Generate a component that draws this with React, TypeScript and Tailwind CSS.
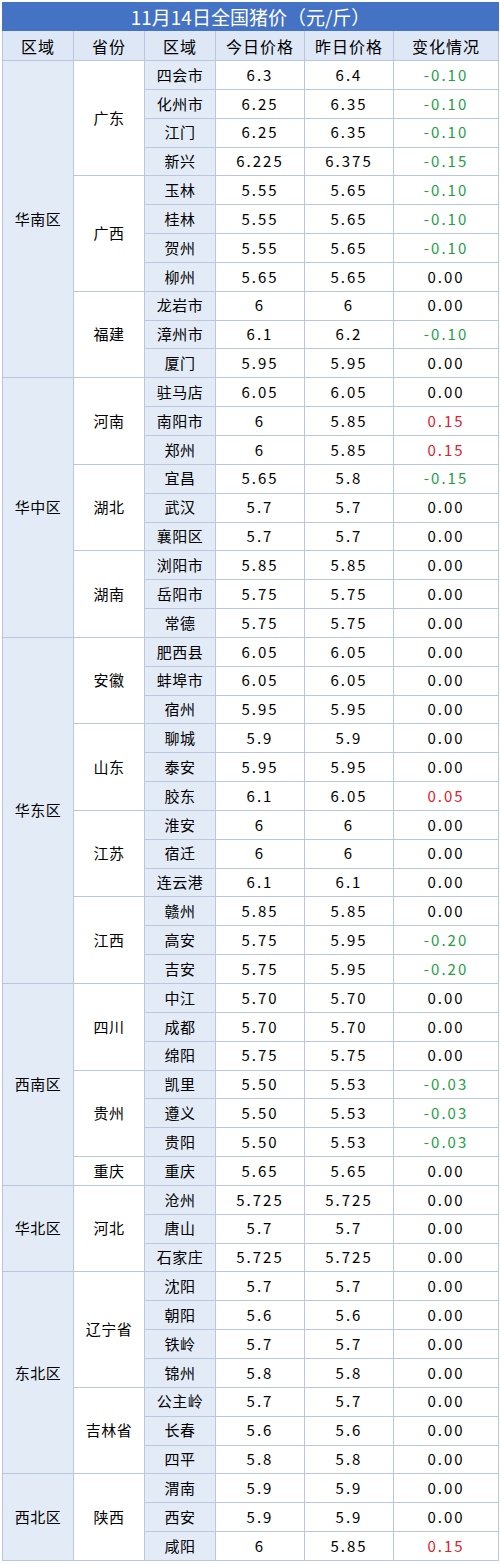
type City = [string, string, string, string]
type Province = { name: string; cities: City[] }
type Region = { name: string; provinces: Province[] }

const regions: Region[] = [
  {
    name: "华南区",
    provinces: [
      {
        name: "广东",
        cities: [
          ["四会市", "6.3", "6.4", "-0.10"],
          ["化州市", "6.25", "6.35", "-0.10"],
          ["江门", "6.25", "6.35", "-0.10"],
          ["新兴", "6.225", "6.375", "-0.15"],
        ],
      },
      {
        name: "广西",
        cities: [
          ["玉林", "5.55", "5.65", "-0.10"],
          ["桂林", "5.55", "5.65", "-0.10"],
          ["贺州", "5.55", "5.65", "-0.10"],
          ["柳州", "5.65", "5.65", "0.00"],
        ],
      },
      {
        name: "福建",
        cities: [
          ["龙岩市", "6", "6", "0.00"],
          ["漳州市", "6.1", "6.2", "-0.10"],
          ["厦门", "5.95", "5.95", "0.00"],
        ],
      },
    ],
  },
  {
    name: "华中区",
    provinces: [
      {
        name: "河南",
        cities: [
          ["驻马店", "6.05", "6.05", "0.00"],
          ["南阳市", "6", "5.85", "0.15"],
          ["郑州", "6", "5.85", "0.15"],
        ],
      },
      {
        name: "湖北",
        cities: [
          ["宜昌", "5.65", "5.8", "-0.15"],
          ["武汉", "5.7", "5.7", "0.00"],
          ["襄阳区", "5.7", "5.7", "0.00"],
        ],
      },
      {
        name: "湖南",
        cities: [
          ["浏阳市", "5.85", "5.85", "0.00"],
          ["岳阳市", "5.75", "5.75", "0.00"],
          ["常德", "5.75", "5.75", "0.00"],
        ],
      },
    ],
  },
  {
    name: "华东区",
    provinces: [
      {
        name: "安徽",
        cities: [
          ["肥西县", "6.05", "6.05", "0.00"],
          ["蚌埠市", "6.05", "6.05", "0.00"],
          ["宿州", "5.95", "5.95", "0.00"],
        ],
      },
      {
        name: "山东",
        cities: [
          ["聊城", "5.9", "5.9", "0.00"],
          ["泰安", "5.95", "5.95", "0.00"],
          ["胶东", "6.1", "6.05", "0.05"],
        ],
      },
      {
        name: "江苏",
        cities: [
          ["淮安", "6", "6", "0.00"],
          ["宿迁", "6", "6", "0.00"],
          ["连云港", "6.1", "6.1", "0.00"],
        ],
      },
      {
        name: "江西",
        cities: [
          ["赣州", "5.85", "5.85", "0.00"],
          ["高安", "5.75", "5.95", "-0.20"],
          ["吉安", "5.75", "5.95", "-0.20"],
        ],
      },
    ],
  },
  {
    name: "西南区",
    provinces: [
      {
        name: "四川",
        cities: [
          ["中江", "5.70", "5.70", "0.00"],
          ["成都", "5.70", "5.70", "0.00"],
          ["绵阳", "5.75", "5.75", "0.00"],
        ],
      },
      {
        name: "贵州",
        cities: [
          ["凯里", "5.50", "5.53", "-0.03"],
          ["遵义", "5.50", "5.53", "-0.03"],
          ["贵阳", "5.50", "5.53", "-0.03"],
        ],
      },
      { name: "重庆", cities: [["重庆", "5.65", "5.65", "0.00"]] },
    ],
  },
  {
    name: "华北区",
    provinces: [
      {
        name: "河北",
        cities: [
          ["沧州", "5.725", "5.725", "0.00"],
          ["唐山", "5.7", "5.7", "0.00"],
          ["石家庄", "5.725", "5.725", "0.00"],
        ],
      },
    ],
  },
  {
    name: "东北区",
    provinces: [
      {
        name: "辽宁省",
        cities: [
          ["沈阳", "5.7", "5.7", "0.00"],
          ["朝阳", "5.6", "5.6", "0.00"],
          ["铁岭", "5.7", "5.7", "0.00"],
          ["锦州", "5.8", "5.8", "0.00"],
        ],
      },
      {
        name: "吉林省",
        cities: [
          ["公主岭", "5.7", "5.7", "0.00"],
          ["长春", "5.6", "5.6", "0.00"],
          ["四平", "5.8", "5.8", "0.00"],
        ],
      },
    ],
  },
  {
    name: "西北区",
    provinces: [
      {
        name: "陕西",
        cities: [
          ["渭南", "5.9", "5.9", "0.00"],
          ["西安", "5.9", "5.9", "0.00"],
          ["咸阳", "6", "5.85", "0.15"],
        ],
      },
    ],
  },
]

const changeColor = (v: string) => {
  const n = parseFloat(v)
  if (n < 0) return "text-[#22a045]"
  if (n > 0) return "text-[#e0202a]"
  return "text-[#000]"
}

const cell = "border border-[#b9c6dc] text-center align-middle p-0"
const num = "tracking-[2px]"

export default function App() {
  return (
    <div
      className="w-[500px] h-[1564px] bg-white pt-[2px] px-[2px]"
      style={{ fontFamily: '"Noto Sans CJK SC", "Noto Sans", sans-serif' }}
    >
      <table className="w-[496px] table-fixed border-collapse text-[15px] text-[#000]">
        <colgroup>
          <col className="w-[71px]" />
          <col className="w-[71px]" />
          <col className="w-[71px]" />
          <col className="w-[89px]" />
          <col className="w-[89px]" />
          <col className="w-[105px]" />
        </colgroup>
        <thead>
          <tr className="h-[28px]">
            <th
              colSpan={6}
              className="border border-[#4472c4] bg-[#4472c4] text-center text-[19px] font-normal text-white leading-none"
            >
              11月14日全国猪价（元/斤）
            </th>
          </tr>
          <tr className="h-[30px] bg-[#dde7f5]">
            {["区域", "省份", "区域", "今日价格", "昨日价格", "变化情况"].map((h, i) => (
              <th key={i} className={`${cell} text-[16px] font-normal tracking-[1px]`}>
                {h}
              </th>
            ))}
          </tr>
        </thead>
        <tbody>
          {regions.map((r) => {
            const total = r.provinces.reduce((s, p) => s + p.cities.length, 0)
            let first = true
            return r.provinces.map((p) =>
              p.cities.map((c, ci) => {
                const showRegion = first
                first = false
                return (
                  <tr key={r.name + p.name + c[0]} className="h-[28.85px]">
                    {showRegion && (
                      <td rowSpan={total} className={`${cell} bg-[#e3ebf7] tracking-[0.5px]`}>
                        {r.name}
                      </td>
                    )}
                    {ci === 0 && (
                      <td rowSpan={p.cities.length} className={`${cell} bg-white tracking-[0.5px]`}>
                        {p.name}
                      </td>
                    )}
                    <td className={`${cell} bg-[#e3ebf7] tracking-[0.5px]`}>{c[0]}</td>
                    <td className={`${cell} ${num}`}>{c[1]}</td>
                    <td className={`${cell} ${num}`}>{c[2]}</td>
                    <td className={`${cell} ${num} ${changeColor(c[3])}`}>{c[3]}</td>
                  </tr>
                )
              })
            )
          })}
        </tbody>
      </table>
    </div>
  )
}
